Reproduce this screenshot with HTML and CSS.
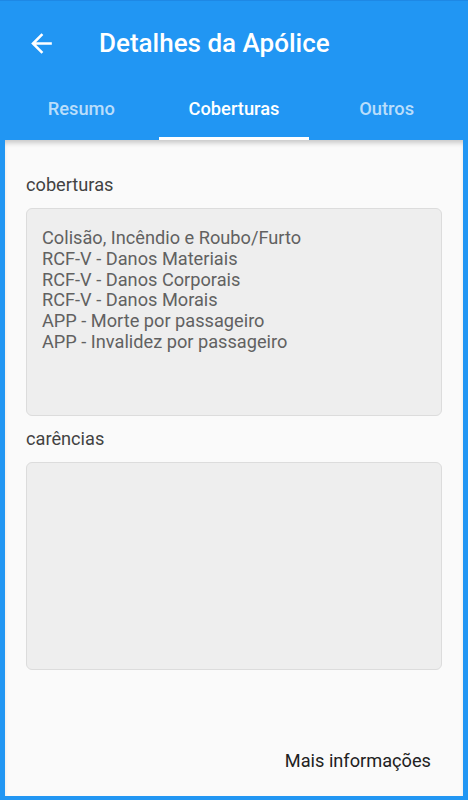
FILE: index.html
```html
<!DOCTYPE html>
<html lang="pt">
<head>
    <meta charset="UTF-8">
    <meta name="viewport" content="width=device-width, initial-scale=1.0">
    <title>Detalhes da Apólice</title>
    <link rel="stylesheet" href="styles.css">
</head>
<body>

<div class="appbar">
    <div class="toolbar">
        <svg class="back" viewBox="0 0 24 24" width="31" height="31">
            <path d="M20 11H7.83l5.59-5.59L12 4l-8 8 8 8 1.41-1.41L7.83 13H20v-2z" fill="#ffffff"/>
        </svg>
        <span class="title">Detalhes da Apólice</span>
    </div>
    <div class="tabs">
        <div class="tab">Resumo</div>
        <div class="tab tab-active">Coberturas</div>
        <div class="tab">Outros</div>
    </div>
</div>

<div class="panel">
    <div class="label">coberturas</div>
    <div class="box">
        Colisão, Incêndio e Roubo/Furto<br>
        RCF-V - Danos Materiais<br>
        RCF-V - Danos Corporais<br>
        RCF-V - Danos Morais<br>
        APP - Morte por passageiro<br>
        APP - Invalidez por passageiro
    </div>

    <div class="label">carências</div>
    <div class="box"></div>

    <div class="more">Mais informações</div>
</div>

</body>
</html>
```

FILE: styles.css
```css
body {
    font-family: Roboto, "Noto Sans", sans-serif;
    background-color: #2196f3;
    margin: 0px;
    padding: 0px;
    height: 800px;
    display: flex;
    flex-direction: column;
    overflow: hidden;
}
.appbar {
    border-top: 1px solid #1e88e5;
}
.toolbar {
    height: 74px;
    padding: 5px 0 0 26px;
    display: flex;
    align-items: center;
}
.back {
    display: block;
}
.title {
    margin-left: 42px;
    color: white;
    font-size: 26px;
    font-weight: 500;
}
.tabs {
    height: 56px;
    margin: 0 5px;
    padding-bottom: 4px;
    display: grid;
    grid-template-columns: 1fr 1fr 1fr;
}
.tab {
    display: flex;
    align-items: center;
    justify-content: center;
    font-size: 18.3px;
    font-weight: 500;
    color: rgba(255, 255, 255, 0.7);
}
.tab-active {
    color: white;
    border-bottom: 3px solid white;
    margin: 0 1px -4px 1px;
    padding-bottom: 1px;
}
.panel {
    flex: 1;
    margin: 0 5px 4px 5px;
    padding: 0 21px;
    background-color: #fafafa;
    box-shadow: inset 0 5px 5px -2px rgba(0, 0, 0, 0.2);
    display: flex;
    flex-direction: column;
}
.label {
    margin-top: 35px;
    line-height: 20px;
    font-size: 18.2px;
    color: #424242;
}
.label + .box {
    margin-top: 13px;
}
.box + .label {
    margin-top: 13px;
}
.box {
    height: 168px;
    padding: 19px 15px 19px 15px;
    background-color: #eeeeee;
    border: 1px solid #dcdcdc;
    border-radius: 6px;
    font-size: 18.2px;
    line-height: 20.8px;
    color: #616161;
}
.more {
    margin-top: auto;
    align-self: flex-end;
    margin-right: 11px;
    padding-bottom: 25px;
    font-size: 18.2px;
    line-height: 21px;
    color: #212121;
}
```
